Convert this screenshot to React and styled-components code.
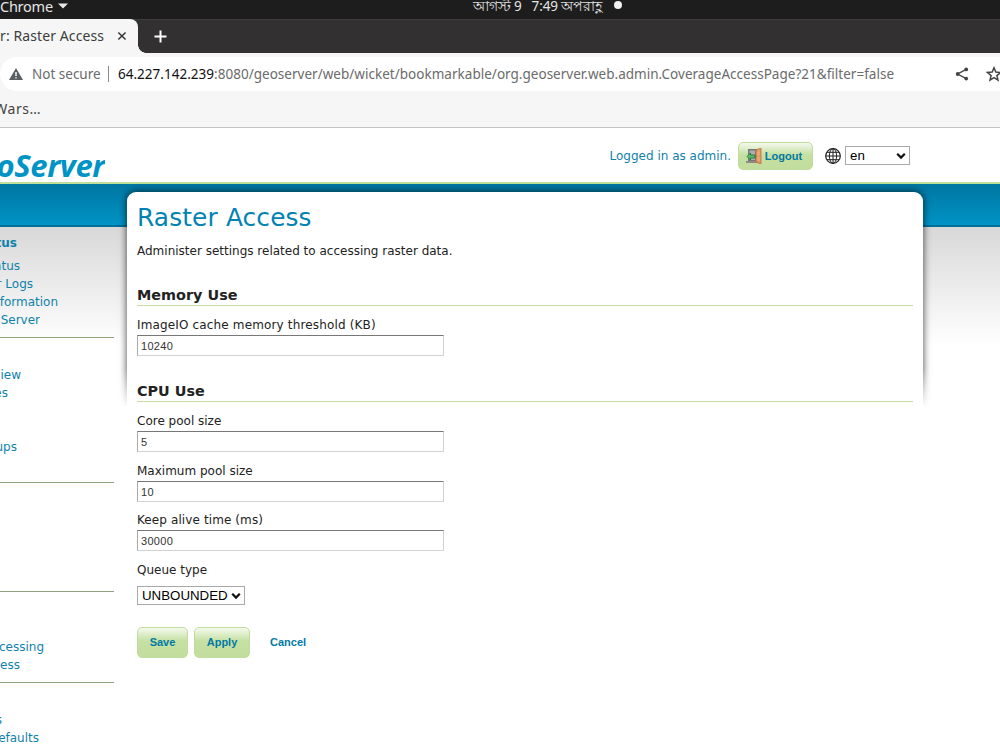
import styled, { createGlobalStyle } from "styled-components";

const GlobalStyle = createGlobalStyle`
  * {
    box-sizing: border-box;
  }
  body {
    margin: 0;
    background: #fff;
    overflow: hidden;
  }
`

const Screen = styled.div`
  width: 1000px;
  height: 750px;
  overflow: hidden;
  display: flex;
  flex-direction: column;
  white-space: nowrap;
  font-family: "DejaVu Sans", sans-serif;
  font-size: 12px;
  color: #222;
`

/* desktop top bar */
const TopBar = styled.div`
  height: 19px;
  background: #1d1d1d;
  color: #e4e4e4;
  display: flex;
  align-items: flex-start;
  font: 14.5px/12px "Noto Sans", sans-serif;
`

const AppMenu = styled.div`
  width: 473px;
  display: flex;
  align-items: center;
  gap: 5px;
  letter-spacing: -0.25px;
`

const Clock = styled.div`
  width: 129px;
  display: flex;
  justify-content: space-between;
  font-size: 13.5px;
  letter-spacing: -0.1px;
`

const Dot = styled.i`
  width: 8px;
  height: 8px;
  margin: 1px 0 0 12px;
  border-radius: 50%;
  background: #f2f2f2;
`

/* browser */
const TabStrip = styled.div`
  height: 34px;
  background: #333031;
  border-top: 1px solid #3f3c3c;
  display: flex;
  align-items: center;
`

const Tab = styled.div`
  width: 138px;
  height: 34px;
  margin-top: -1px;
  padding: 0 11px 0 0;
  background: #f6f6f6;
  border-radius: 0 8px 0 0;
  display: flex;
  align-items: center;
  justify-content: flex-end;
  gap: 13px;
  position: relative;
  font: 14px/20px "Noto Sans", sans-serif;
  letter-spacing: 0.1px;
  color: #3d3d3d;
  &::after {
    content: "";
    position: absolute;
    left: 138px;
    bottom: 0;
    width: 8px;
    height: 8px;
    background: radial-gradient(circle at 8px 0, transparent 7.5px, #f6f6f6 8px);
  }
`

const NewTab = styled.svg`
  margin-left: 16px;
`

const Toolbar = styled.div`
  height: 41px;
  padding: 4px 0 3px;
  background: #f6f6f6;
`

const UrlBar = styled.div`
  height: 34px;
  background: #fff;
  border-radius: 17px 0 0 17px;
  display: flex;
  align-items: center;
  padding-left: 9px;
  font: 13.5px/20px "Noto Sans", sans-serif;
  color: #6b6b6b;
  > * {
    flex: none;
  }
`

const NotSecure = styled.span`
  width: 77px;
  padding-left: 9px;
`

const Separator = styled.i`
  width: 1px;
  height: 16px;
  margin: 0 9px 0 8px;
  background: #8a8a8a;
`

const Url = styled.span`
  width: 837px;
  letter-spacing: 0.02px;
  b {
    font-weight: normal;
    color: #111;
  }
`

const Bookmarks = styled.div`
  height: 34px;
  background: #f6f6f6;
  border-bottom: 1px solid #c2c2c2;
  font: 14px/30px "Noto Sans", sans-serif;
  letter-spacing: 0.5px;
  color: #444;
`

/* text that runs in from beyond the left edge of the window */
const Cut = styled.span`
  width: ${(p) => p.$end}px;
  display: flex;
  justify-content: flex-end;
  overflow: hidden;
`

/* page header */
const Header = styled.header`
  height: 56px;
  border-bottom: 2px solid #bfdf9a;
  display: flex;
  justify-content: space-between;
`

const Logo = styled.div`
  padding-top: 19px;
  font: italic bold 31px/36px "Open Sans", sans-serif;
  letter-spacing: -0.35px;
  color: #0093c5;
`

const Session = styled.div`
  height: 28px;
  margin: 14px 90px 0 0;
  display: flex;
  align-items: center;
  color: #0f82ab;
`

const GreenButton = styled.button`
  width: ${(p) => p.$w}px;
  height: ${(p) => p.$h}px;
  padding: 0 0 1px;
  border: 1px solid #c0dd9b;
  border-radius: 5px;
  background: linear-gradient(#f4f9ed 0, #c5e0a2 45%, #c2dd9d 100%);
  display: flex;
  align-items: center;
  justify-content: center;
  gap: 3px;
  font: bold 11px/14px "Liberation Sans", sans-serif;
  color: #0079a5;
`

const LogoutButton = styled(GreenButton)`
  margin-left: 7px;
  padding-right: 3px;
`

const SelectBox = styled.div`
  width: ${(p) => p.$w}px;
  height: 19px;
  border: 1px solid #a9a9a9;
  background: #fff;
  display: flex;
  align-items: center;
  padding-right: 3px;
`

const Language = styled(SelectBox)`
  margin-bottom: 1px;
`

const Select = styled.select`
  appearance: none;
  flex: 1;
  min-width: 0;
  padding: 0 0 0 4px;
  border: none;
  background: none;
  font: 13.3px/17px "Liberation Sans", sans-serif;
  color: #000;
`

/* page body */
const Main = styled.div`
  flex: 1;
  min-height: 0;
  display: grid;
  grid-template-columns: 127px 796px;
  background:
    linear-gradient(#0076a1 0, #0093c5 41px, #006f9a 41px, #006f9a 43px, transparent 43px),
    linear-gradient(#fff 43px, #d8d8d8 43px, #fff 161px);
`

const Sidebar = styled.nav`
  padding-top: 50px;
  color: #0f82ab;
`

const Group = styled.div`
  width: 114px;
  height: ${(p) => p.$h}px;
  padding-top: ${(p) => p.$top}px;
  border-bottom: 1px solid #8fa37c;
  line-height: 18px;
`

const GroupTitle = styled.div`
  height: 23px;
  font-weight: bold;
`

const Entry = styled.div`
  height: 18px;
`

const Panel = styled.main`
  position: relative;
  isolation: isolate;
  margin-top: 8px;
  padding: 9px 10px 0;
`

/* shadow fades out some way down the panel */
const Shadow = styled.div`
  position: absolute;
  z-index: -2;
  inset: -10px -10px auto;
  height: 228px;
  padding: 10px 10px 0;
  mask: linear-gradient(#000 82%, transparent 99%);
  &::before {
    content: "";
    display: block;
    height: 240px;
    border-radius: 9px;
    box-shadow: 0 0 7px 1px rgba(0, 0, 0, 0.6);
  }
`

const Sheet = styled.div`
  position: absolute;
  z-index: -1;
  inset: 0;
  background: #fff;
  border-radius: 9px 9px 0 0;
`

const Title = styled.h1`
  margin: 0;
  font: 24.8px/34px "DejaVu Sans", sans-serif;
  letter-spacing: 0.15px;
  color: #0083b3;
`

const Intro = styled.p`
  margin: 8px 0 0;
  line-height: 16px;
`

const Section = styled.h2`
  margin: ${(p) => p.$top}px 0 10px;
  height: 21px;
  border-bottom: 1px solid #c8dba5;
  font: bold 14.4px/20px "DejaVu Sans", sans-serif;
`

const Field = styled.label`
  height: ${(p) => p.$h || 50}px;
  display: flex;
  flex-direction: column;
  gap: ${(p) => p.$gap || 1}px;
  line-height: 18px;
  letter-spacing: ${(p) => p.$track || 0}px;
`

const Input = styled.input`
  width: 307px;
  height: 21px;
  padding: 0 3px;
  border: 1px solid #d2d2d2;
  border-top-color: #777;
  border-left-color: #aaa;
  font: 11px/19px "Liberation Sans", sans-serif;
  letter-spacing: 0.3px;
  color: #333;
`

const Actions = styled.div`
  display: flex;
  gap: 6px;
`

const Cancel = styled.a`
  margin-left: 14px;
  font: bold 11px/31px "Liberation Sans", sans-serif;
  color: #0079a5;
`

const groups = [
  { top: 0, h: 104, title: ["atus", 17], items: [["tatus", 20], ["r Logs", 33], ["nformation", 58], ["Server", 40]] },
  { top: 28, h: 145, items: [["view", 21], ["es", 8], null, null, ["oups", 17]] },
  { top: 0, h: 109, items: [] },
  { top: 46, h: 91, items: [["ocessing", 44], ["cess", 20]] },
  { top: 28, h: 100, items: [["s", 2], ["efaults", 39]] },
]

const Chevron = () => (
  <svg width="10" height="8" viewBox="0 0 10 8">
    <path d="M1.2 1.7 5 5.6 8.8 1.7" fill="none" stroke="#111" strokeWidth="2.2" />
  </svg>
)

const Warning = () => (
  <svg width="14" height="12" viewBox="0 0 14 12">
    <path d="M7 0 14 12H0z" fill="#5a5f63" />
    <path d="M7 4v4M7 9.2v1.4" stroke="#fff" strokeWidth="1.4" />
  </svg>
)

const Share = () => (
  <svg width="14" height="14" viewBox="0 0 14 14">
    <path d="M11.3 2.3 2.6 7l8.7 4.7" fill="none" stroke="#444" strokeWidth="1.4" />
    <circle cx="11.2" cy="2.4" r="1.9" fill="#444" />
    <circle cx="2.7" cy="7" r="1.9" fill="#444" />
    <circle cx="11.2" cy="11.6" r="1.9" fill="#444" />
  </svg>
)

const Star = styled.svg`
  margin-left: 17px;
`

const Door = () => (
  <svg width="16" height="16" viewBox="0 0 16 16">
    <path d="M2 1h9v12H2z" fill="#77777a" />
    <path d="M3.5 2.5H9V12H3.5z" fill="#aaaeb0" />
    <path d="M0 13h12v2H0z" fill="#8d8a86" />
    <path d="M10 2 15 0v16l-5-2z" fill="#e59a66" stroke="#bd6c3c" strokeWidth=".8" />
    <path d="M11.5 4 13.8 3v4l-2.3.5zM11.5 9l2.3.3v3.8l-2.3-.8z" fill="#ecaa7b" />
    <path d="M1 8.5 4.5 5v2H9v3H4.5v2z" fill="#5fba6c" stroke="#13742c" strokeWidth=".8" />
  </svg>
)

const Globe = styled.svg`
  margin: 0 4px 0 12px;
`

const App = () => {
  return (
    <Screen>
      <GlobalStyle />
      <TopBar>
        <AppMenu>
          Chrome
          <svg width="10" height="6" viewBox="0 0 10 6"><path d="M0 .5h10L5 5.5z" fill="#e8e8e8" /></svg>
        </AppMenu>
        <Clock><span>আগস্ট 9</span><span>7:49 অপরাহ্ণ</span></Clock>
        <Dot />
      </TopBar>
      <TabStrip>
        <Tab>
          r: Raster Access
          <svg width="10" height="10" viewBox="0 0 11 10"><path d="m1.5 1 8 8m0-8-8 8" stroke="#333" strokeWidth="1.6" /></svg>
        </Tab>
        <NewTab width="13" height="13" viewBox="0 0 13 13"><path d="M6.5.5v12M.5 6.5h12" stroke="#fff" strokeWidth="2" /></NewTab>
      </TabStrip>
      <Toolbar>
        <UrlBar>
          <Warning />
          <NotSecure>Not secure</NotSecure>
          <Separator />
          <Url><b>64.227.142.239</b>:8080/geoserver/web/wicket/bookmarkable/org.geoserver.web.admin.CoverageAccessPage?21&amp;filter=false</Url>
          <Share />
          <Star width="16" height="16" viewBox="0 0 16 16">
            <path d="m8 1.8 1.8 4.3 4.7.4-3.6 3.1 1.1 4.6L8 11.7l-4 2.5 1.1-4.6-3.6-3.1 4.7-.4z" fill="none" stroke="#444" strokeWidth="1.5" />
          </Star>
        </UrlBar>
      </Toolbar>
      <Bookmarks><Cut $end={41}>Wars…</Cut></Bookmarks>

      <Header>
        <Logo><Cut $end={105}>oServer</Cut></Logo>
        <Session>
          <span>Logged in as admin.</span>
          <LogoutButton $w={75} $h={28}><Door />Logout</LogoutButton>
          <Globe width="16" height="16" viewBox="0 0 16 16">
            <g fill="none" stroke="#222" strokeWidth="1">
              <circle cx="8" cy="8" r="7.3" strokeWidth="1.2" />
              <ellipse cx="8" cy="8" rx="3.6" ry="7.3" />
              <path d="M8 .7v14.6M.7 8h14.6M2 4.3h12M2 11.7h12" />
            </g>
          </Globe>
          <Language $w={65}>
            <Select defaultValue="en"><option>en</option></Select>
            <Chevron />
          </Language>
        </Session>
      </Header>

      <Main>
        <Sidebar>
          {groups.map((g, i) => (
            <Group key={i} $top={g.top} $h={g.h}>
              {g.title && <GroupTitle><Cut $end={g.title[1]}>{g.title[0]}</Cut></GroupTitle>}
              {g.items.map((item, n) => (
                <Entry key={n}>{item && <Cut $end={item[1]}>{item[0]}</Cut>}</Entry>
              ))}
            </Group>
          ))}
        </Sidebar>
        <Panel>
          <Shadow />
          <Sheet />
          <Title>Raster Access</Title>
          <Intro>Administer settings related to accessing raster data.</Intro>
          <Section $top={26}>Memory Use</Section>
          <Field $track={0.15}>ImageIO cache memory threshold (KB)<Input defaultValue="10240" /></Field>
          <Section $top={15}>CPU Use</Section>
          <Field>Core pool size<Input defaultValue="5" /></Field>
          <Field $h={49}>Maximum pool size<Input defaultValue="10" /></Field>
          <Field $track={0.1}>Keep alive time (ms)<Input defaultValue="30000" /></Field>
          <Field $h={66} $gap={7}>
            Queue type
            <SelectBox $w={108}>
              <Select defaultValue="UNBOUNDED"><option>UNBOUNDED</option></Select>
              <Chevron />
            </SelectBox>
          </Field>
          <Actions>
            <GreenButton $w={51} $h={31}>Save</GreenButton>
            <GreenButton $w={56} $h={31}>Apply</GreenButton>
            <Cancel>Cancel</Cancel>
          </Actions>
        </Panel>
      </Main>
    </Screen>
  );
};

export default App;
